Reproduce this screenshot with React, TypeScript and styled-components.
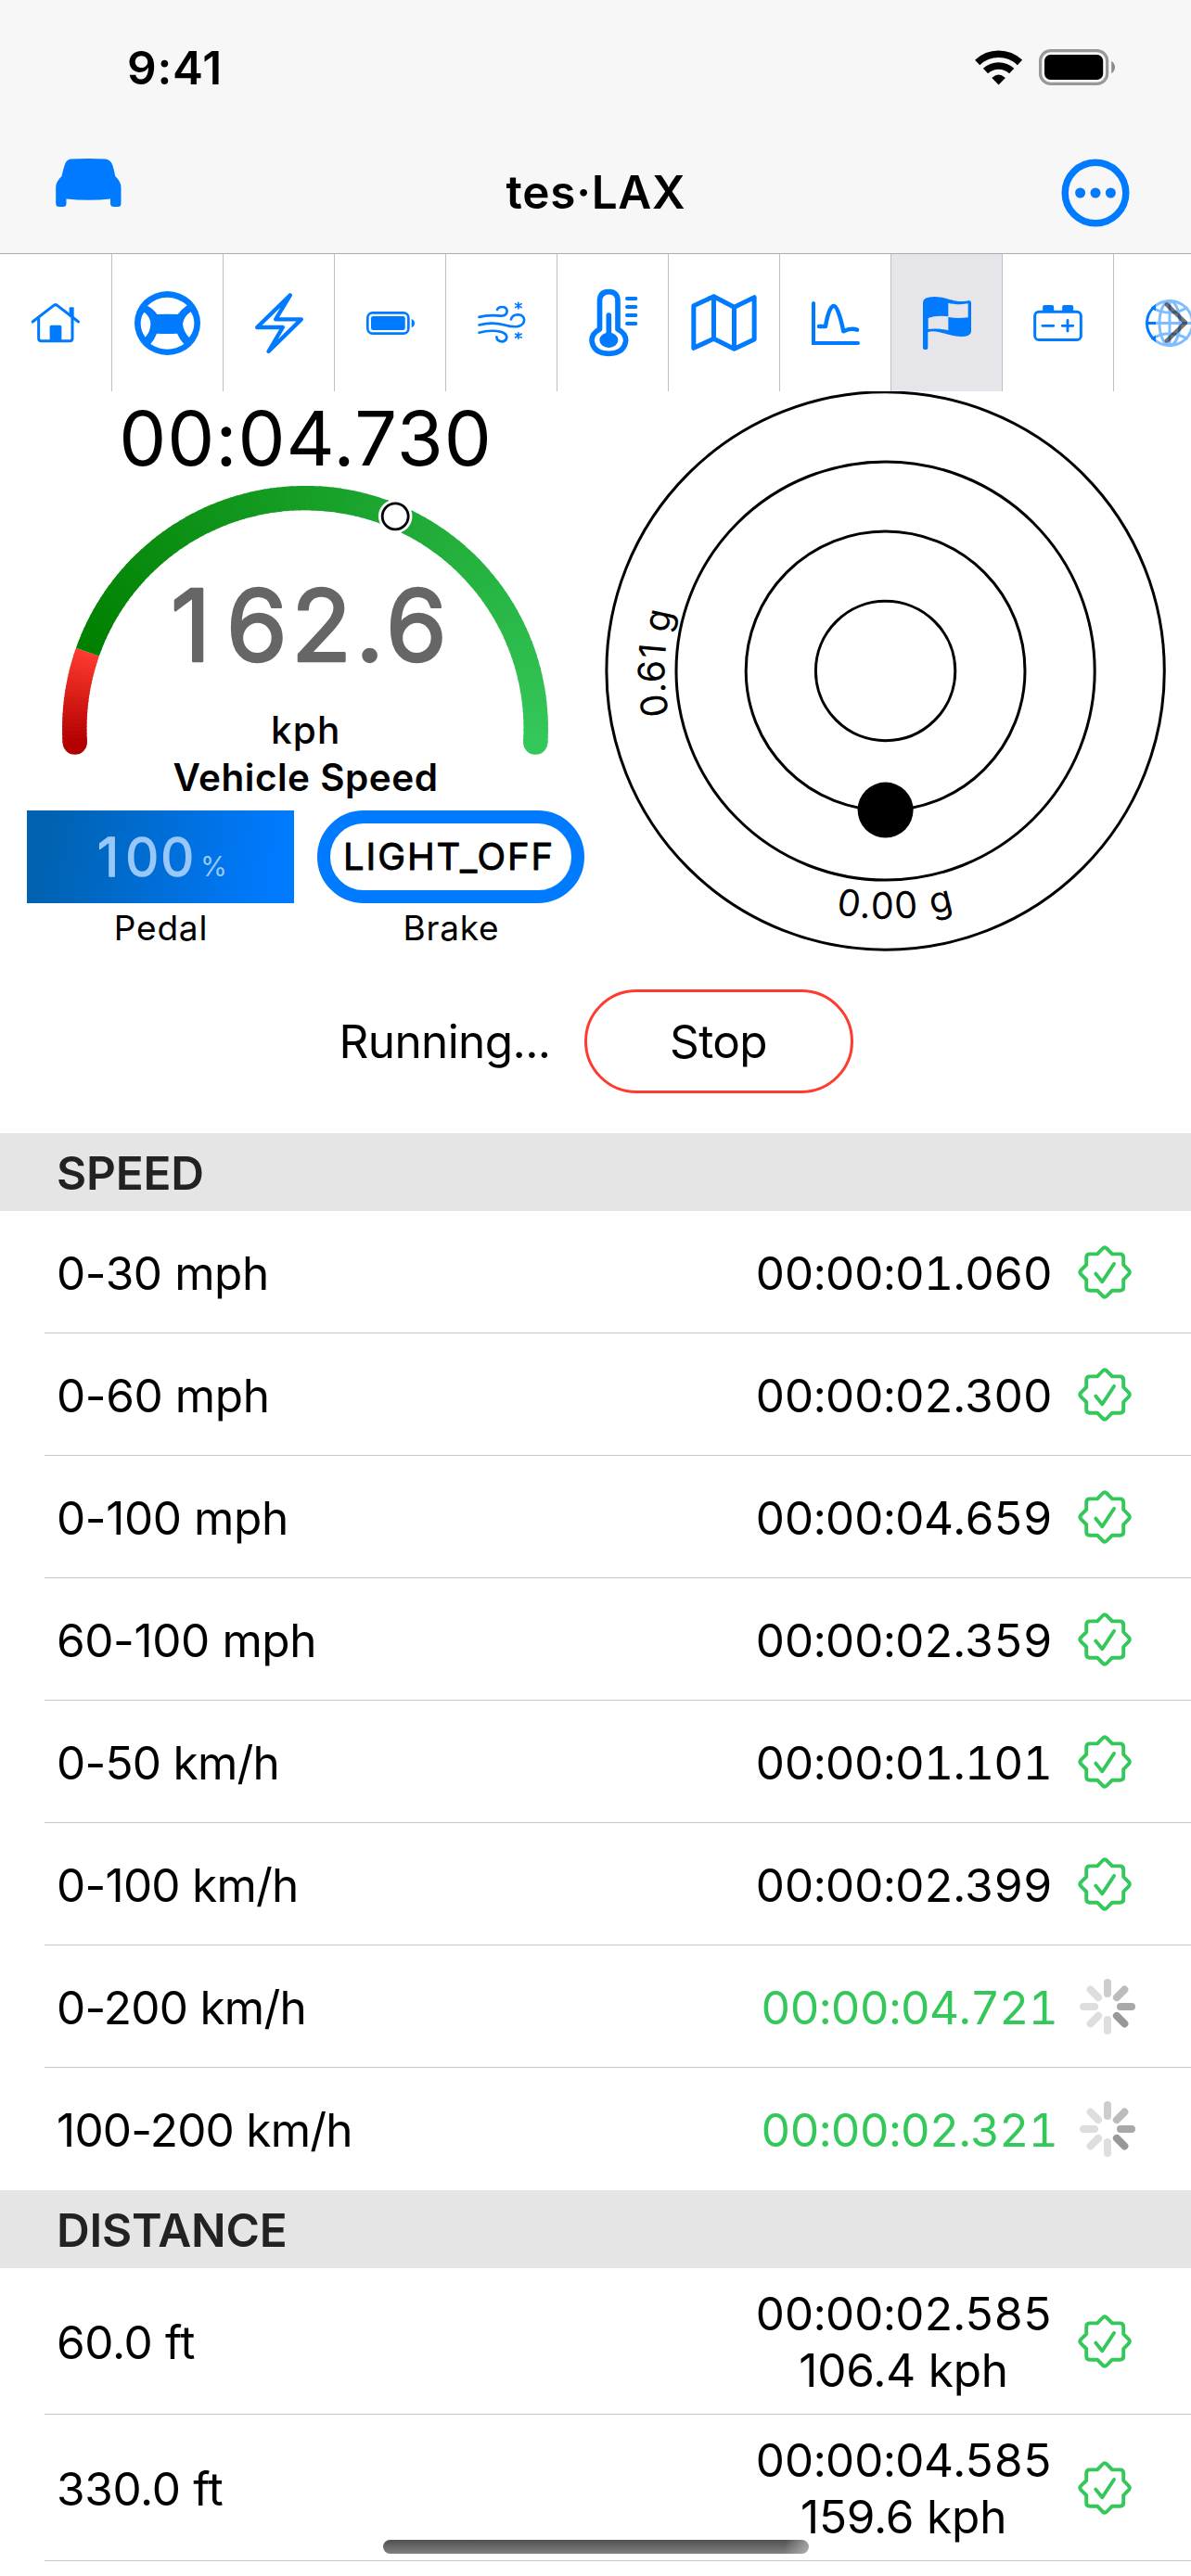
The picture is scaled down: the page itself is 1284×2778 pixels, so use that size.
import React from "react";
import styled, { createGlobalStyle } from "styled-components";

const BLUE = "#007aff";
const GREEN = "#34c759";
const FONT = `Inter, "Liberation Sans", sans-serif`;

const GlobalStyle = createGlobalStyle`
  body { margin: 0; background: #fff; }
  * { box-sizing: border-box; }
  svg { display: block; flex: none; }
`;

const Screen = styled.main`
  position: relative;
  width: 1284px;
  height: 2778px;
  overflow: hidden;
  background: #fff;
  color: #000;
  font-family: ${FONT};
  font-size: 49.5px;
`;

const Header = styled.header`
  height: 274px;
  background: #f7f7f7;
  border-bottom: 1px solid #ababab;
`;

const StatusBar = styled.div`
  display: flex;
  align-items: center;
  height: 145px;
  padding: 0 81px 0 137px;
`;

const Clock = styled.span`
  flex: 1;
  font-weight: 600;
  letter-spacing: 0.8px;
`;

const StatusIcons = styled.div`
  display: flex;
  align-items: center;
  gap: 18px;
`;

const NavBar = styled.nav`
  display: grid;
  grid-template-columns: 85px 1fr 85px;
  align-items: center;
  height: 125px;
  padding: 0 60px;
`;

const NavButton = styled.button<{ $end?: boolean }>`
  display: flex;
  justify-content: ${(p) => (p.$end ? "flex-end" : "flex-start")};
  padding: 0 ${(p) => (p.$end ? 6 : 0)}px ${(p) => (p.$end ? 0 : 21)}px 0;
  border: 0;
  background: none;
`;

const Title = styled.h1`
  margin: 0;
  padding: 0 0 2px 1px;
  text-align: center;
  font-size: 49.5px;
  font-weight: 600;
  letter-spacing: 0.7px;
`;

const TabStrip = styled.div`
  position: relative;
  display: flex;
  height: 148px;
  overflow: hidden;
`;

const Tab = styled.button<{ $active?: boolean }>`
  display: flex;
  flex: none;
  align-items: center;
  justify-content: center;
  width: 120px;
  padding: 0;
  border: 0;
  border-right: 1px solid #c0c0c2;
  background: ${(p) => (p.$active ? "#e5e5ea" : "#fff")};
  color: ${BLUE};

  &:first-child {
    width: 121px;
  }
`;

const ScrollHint = styled.div`
  position: absolute;
  top: 0;
  right: 0;
  display: flex;
  align-items: center;
  width: 38px;
  height: 100%;
  padding-left: 9px;
  background: rgba(255, 255, 255, 0.5);
`;

const Dashboard = styled.section`
  display: flex;
  gap: 22px;
  height: 604px;
  padding-left: 29px;
`;

const SpeedPanel = styled.div`
  display: flex;
  flex-direction: column;
  align-items: center;
  width: 601px;
  padding-top: 2px;
`;

const Timer = styled.div`
  height: 98px;
  font-size: 81px;
  line-height: 98px;
  letter-spacing: 0.95px;
`;

const GaugeSvg = styled.svg`
  overflow: visible;
`;

const GaugeTitle = styled.div`
  height: 50px;
  font-size: 40.5px;
  font-weight: 600;
  line-height: 50px;
  letter-spacing: 0.5px;
`;

const Tiles = styled.div`
  display: grid;
  grid-template-columns: 288px 288px;
  gap: 25px;
  margin-top: 10px;
`;

const Tile = styled.div`
  display: flex;
  flex-direction: column;
  align-items: center;
`;

const PedalBar = styled.div`
  width: 288px;
  height: 100px;
  background: linear-gradient(100deg, #0062b0 8%, #007aff 92%);
`;

const BrakePill = styled.div`
  width: 288px;
  height: 100px;
  border: 14.5px solid ${BLUE};
  border-radius: 50px;
`;

const TileLabel = styled.span`
  padding-left: 1px;
  font-size: 37px;
  line-height: 53px;
  letter-spacing: 0.8px;
`;

const RoundText = styled.text<{ $size: number; $spacing: number; $stroke: number }>`
  font-family: ${FONT};
  font-size: ${(p) => p.$size}px;
  font-weight: 400;
  letter-spacing: ${(p) => p.$spacing}px;
  stroke: currentColor;
  stroke-width: ${(p) => p.$stroke}px;
  stroke-linejoin: round;
  fill: currentColor;
`;

const PlainText = styled.text<{ $size: number; $weight?: number; $spacing?: number }>`
  font-family: ${FONT};
  font-size: ${(p) => p.$size}px;
  font-weight: ${(p) => p.$weight ?? 400};
  letter-spacing: ${(p) => p.$spacing ?? 0}px;
`;

const ForceSvg = styled.svg`
  margin-top: -2px;
  overflow: visible;
`;

const RunBar = styled.section`
  display: flex;
  align-items: center;
  justify-content: center;
  gap: 36px;
  height: 196px;
  padding: 0 0 3px 1px;
`;

const RunState = styled.span`
  letter-spacing: -0.6px;
`;

const StopButton = styled.button`
  width: 290px;
  height: 112px;
  padding: 0;
  border: 3px solid #ff3b30;
  border-radius: 56px;
  background: #fff;
  color: #000;
  font: inherit;
  letter-spacing: -0.6px;
`;

const SectionHeader = styled.h2`
  height: 84px;
  margin: 0;
  padding: 2px 0 0 61px;
  background: #e5e5e5;
  color: #222;
  font-size: 49.5px;
  font-weight: 600;
  line-height: 82px;
  letter-spacing: -0.2px;
`;

const Row = styled.div<{ $tall?: boolean }>`
  height: ${(p) => (p.$tall ? 158 : 132)}px;
  padding-left: 48px;
`;

const RowBody = styled.div<{ $line: boolean }>`
  display: flex;
  align-items: center;
  justify-content: space-between;
  height: 100%;
  padding: ${(p) => (p.$line ? 1 : 0)}px 60px 0 13px;
  border-bottom: ${(p) => (p.$line ? "1px solid #c6c6c8" : "0")};
`;

const labelSpacing = { mph: -0.4, kmh: -0.75, ft: -0.35 };

const RowLabel = styled.span<{ $unit: keyof typeof labelSpacing }>`
  padding-top: 2px;
  letter-spacing: ${(p) => labelSpacing[p.$unit]}px;
`;

const Result = styled.div`
  display: flex;
  align-items: center;
  gap: 24px;
`;

const Times = styled.div<{ $running?: boolean }>`
  display: flex;
  flex-direction: column;
  align-items: center;
  padding-top: 2px;
  color: ${(p) => (p.$running ? GREEN : "#000")};
  line-height: 61px;
`;

const Elapsed = styled.span`
  font-variant-numeric: tabular-nums;
  letter-spacing: -0.75px;
`;

const TrapSpeed = styled.span`
  letter-spacing: -0.2px;
`;

const HomeIndicator = styled.div`
  position: absolute;
  bottom: 24px;
  left: 413px;
  width: 459px;
  height: 15px;
  border-radius: 8px;
  background:
    linear-gradient(100deg, rgba(190, 190, 190, 0) 94%, rgba(190, 190, 190, 0.75) 100%),
    linear-gradient(#505050, #808080);
`;

const WifiIcon = () => (
  <svg width="51" height="38" viewBox="1051 53.5 51 38" fill="none" stroke="#000">
    <path d="M1053.7 66.9A33.2 33.2 0 0 1 1099.5 66.9" strokeWidth="7.6" />
    <path d="M1062.5 76.1A20.5 20.5 0 0 1 1090.7 76.1" strokeWidth="7.6" />
    <path d="M1070.6 83.6Q1076.6 78.5 1082.6 83.6L1076.6 89.7Z" fill="#000" strokeWidth="1.8" />
  </svg>
);

const StatusBattery = () => (
  <svg width="83" height="39" viewBox="0 0 83 39">
    <rect x="1.6" y="1.6" width="72" height="35.8" rx="11" fill="none" stroke="#989898" strokeWidth="3.2" />
    <rect x="6" y="6" width="63.2" height="27" rx="6.5" />
    <path d="M78.2 12.8Q82 15.5 82 19.5T78.2 26.2Z" fill="#8c8c8c" />
  </svg>
);

const CarIcon = () => (
  <svg width="71" height="52" viewBox="0 0 71 52" fill={BLUE}>
    <path d="M16 0.6Q35.5-.6 54 .6Q59 1.200 61.300 7Q63 12 64.200 19Q70.500 25 70.500 31V48.500Q70.500 52 67 52H63Q59 52 59 48.500V43.400Q35 46 11.500 43.400V48.500Q11.500 52 8 52H4Q0.200 52 0.200 48.500V31Q0.200 25 6.500 19Q8 12 9.700 7Q11.500 1.200 16 .6Z" />
  </svg>
);

const MoreIcon = () => (
  <svg width="74" height="74" viewBox="0 0 74 74" fill={BLUE}>
    <circle cx="37" cy="37" r="32.8" fill="none" stroke={BLUE} strokeWidth="7.4" />
    <circle cx="20.600" cy="37" r="5.500" />
    <circle cx="37" cy="37" r="5.500" />
    <circle cx="53.400" cy="37" r="5.500" />
  </svg>
);

type GlyphProps = { box: string; w: number; h: number; stroke?: number; children: React.ReactNode };

const Glyph = ({ box, w, h, stroke = 0, children }: GlyphProps) => (
  <svg
    width={w}
    height={h}
    viewBox={box}
    overflow="visible"
    fill="none"
    stroke="currentColor"
    strokeWidth={stroke}
    strokeLinecap="round"
    strokeLinejoin="round"
  >
    {children}
  </svg>
);

const HouseGlyph = () => (
  <Glyph box="103 185 156 126" w={52} h={42} stroke={9}>
    <path d="M106.500 245L173 193.500Q180.500 186.500 188 193.500L254.500 245" />
    <path d="M126 232V299Q126 307 134 307H227Q235 307 235 299V232" />
    <path d="M162 307V261Q162 256 167 256H195Q200 256 200 261V307Z" fill="currentColor" stroke="none" />
    <path d="M225 226V201Q225 198 228 198H237Q240 198 240 201V238Z" fill="currentColor" stroke="none" />
  </Glyph>
);

const WheelGlyph = () => (
  <Glyph box="435 144 213 207" w={71} h={69}>
    <path
      fill="currentColor"
      fillRule="evenodd"
      d="M435 247.500A106.500 103.500 0 1 1 648 247.500A106.500 103.500 0 1 1 435 247.500Z
        M477 191Q505 164 541 164T605 190Q587 203 575 219Q541 217 508 219Q498 203 477 191Z
        M487 315Q500 300 507 281Q541 283 573 281Q581 300 595 315Q570 332 541 332T487 315Z
        M466 212Q486 225 487 250Q487 275 470 293Q455 272 455 248Q455 228 466 212Z
        M617 211Q594 226 591 250Q593 275 612 294Q628 272 628 248Q628 227 617 211Z"
    />
  </Glyph>
);

const BoltGlyph = () => (
  <Glyph box="822 150 155 195" w={52} h={65} stroke={13}>
    <path d="M935 157L828 261H911L865 339L971 235H888Z" />
  </Glyph>
);

const BatteryGlyph = () => (
  <Glyph box="1182 210 157 75" w={52} h={25} stroke={8}>
    <rect x="1186" y="214" width="133" height="67" rx="16" />
    <rect x="1197" y="225" width="111" height="45" rx="7" fill="currentColor" stroke="none" />
    <path d="M1329 234Q1339 238 1339 248T1329 261Z" fill="currentColor" stroke="none" />
  </Glyph>
);

const Asterisk = ({ x, y }: { x: number; y: number }) => (
  <path strokeWidth="5" d={`M${x} ${y - 10}V${y + 10}M${x - 10} ${y - 6}L${x + 10} ${y + 6}M${x - 10} ${y + 6}L${x + 10} ${y - 6}`} />
);

const WindGlyph = () => (
  <Glyph box="163 183 156 133" w={52} h={44} stroke={8}>
    <path d="M167 231C200 222 222 227 243 227Q258 225 258 211Q256 198 242 198Q229 198 226 207" />
    <path d="M167 257C200 248 225 250 250 257Q275 264 292 262Q314 258 314 240Q312 224 294 223Q274 224 271 239" />
    <path d="M167 282Q205 271 240 280Q257 286 257 297Q255 311 240 311Q225 309 224 296" />
    <Asterisk x={295} y={194} />
    <Asterisk x={295} y={292} />
  </Glyph>
);

const ThermometerGlyph = () => (
  <Glyph box="521 141 156 216" w={52} h={72} stroke={17}>
    <path d="M555.500 180Q555.500 149 585 149T614 180V270Q640 284 640 306Q636 348 585 349Q534 348 530 306Q530 284 555.500 270Z" />
    <path d="M585 225V300" />
    <ellipse cx="585" cy="305.500" rx="30" ry="24.500" fill="currentColor" stroke="none" />
    <path strokeWidth="12" d="M644 171H672M644 198H672M644 225H672M644 252H672" />
  </Glyph>
);

const MapGlyph = () => (
  <Glyph box="855 156 212 186" w={71} h={62} stroke={15}>
    <path d="M863 194L928 164L994 199L1059 167V303L994 334L928 301L863 331ZM928 164V301M994 199V334" />
  </Glyph>
);

const ChartGlyph = () => (
  <Glyph box="42 177 156 141" w={52} h={47} stroke={12}>
    <path strokeLinejoin="miter" d="M48 183V312H192" />
    <path strokeWidth="13.500" d="M66 258H87Q98 192 114 192Q128 192 145 274Q168 262 189 269" />
  </Glyph>
);

const FlagGlyph = () => (
  <Glyph box="402 162 156 171" w={52} h={57}>
    <path
      fill="currentColor"
      fillRule="evenodd"
      d="M402 180Q402 162 440 162C475 163 500 177 522 177Q543 177 550 174Q558 174 558 182V275Q556 291 525 291C490 291 460 274 435 274Q425 274 418 277V326Q418 333 410 333T402 326Z
        M484 182C503 187 530 188 548 184V229Q515 234 484 228Z
        M419 231Q445 221 484 226V271Q448 262 419 267Z"
    />
  </Glyph>
);

const CarBatteryGlyph = () => (
  <Glyph box="762 189 158 117" w={53} h={39} stroke={9}>
    <rect x="766.500" y="210.500" width="149" height="91" rx="13" />
    <path d="M792 208V195Q792 189 798 189H822Q828 189 828 195V208ZM855 208V195Q855 189 861 189H885Q891 189 891 195V208Z" fill="currentColor" stroke="none" />
    <path strokeWidth="8.500" d="M791 256H827M855 256H890M872.500 238V273" />
  </Glyph>
);

const GlobeGlyph = () => (
  <Glyph box="1122 171 156 153" w={52} h={51} stroke={9}>
    <ellipse cx="1200" cy="247.500" rx="73.500" ry="72" />
    <ellipse cx="1200" cy="247.500" rx="33" ry="72" />
    <path d="M1200 175V320M1127 247.500H1273M1145 198Q1200 229 1255 198M1145 297Q1200 266 1255 297" />
  </Glyph>
);

const tabs = [
  HouseGlyph, WheelGlyph, BoltGlyph, BatteryGlyph, WindGlyph, ThermometerGlyph,
  MapGlyph, ChartGlyph, FlagGlyph, CarBatteryGlyph, GlobeGlyph,
];
const ACTIVE_TAB = 8;

const mix = (a: number[], b: number[], t: number) =>
  `rgb(${a.map((v, i) => Math.round(v + (b[i] - v) * t)).join(",")})`;

const CX = 329;
const CY = 785.8;
const R = 248.7;
const polar = (deg: number, r = R) => {
  const a = (deg * Math.PI) / 180;
  return [CX - r * Math.cos(a), CY - r * Math.sin(a)];
};

type ArcProps = { from: number; to: number; a: number[]; b: number[]; steps: number };

/* Angles run clockwise from the left-hand side of the dial. */
const GradientArc = ({ from, to, a, b, steps }: ArcProps) => (
  <g fill="none" strokeWidth="26.400">
    {Array.from({ length: steps }, (_, i) => {
      const s = from + ((to - from) * i) / steps;
      const e = Math.min(to, from + ((to - from) * (i + 1)) / steps + 0.4);
      const [x1, y1] = polar(s);
      const [x2, y2] = polar(e);
      return <path key={i} d={`M${x1} ${y1}A${R} ${R} 0 0 1 ${x2} ${y2}`} stroke={mix(a, b, (i + 0.5) / steps)} />;
    })}
  </g>
);

const Gauge = () => {
  const [lx, ly] = polar(-3.4);
  const [rx, ry] = polar(183.4);
  const [mx, my] = polar(113);
  return (
    <GaugeSvg width="601" height="292" viewBox="29 522 601 292">
      <circle cx={lx} cy={ly} r="13.200" fill="#b30000" />
      <circle cx={rx} cy={ry} r="13.200" fill={GREEN} />
      <GradientArc from={-3.4} to={19.4} a={[179, 0, 0]} b={[255, 59, 48]} steps={24} />
      <GradientArc from={19.4} to={183.4} a={[0, 128, 0]} b={[52, 199, 89]} steps={100} />
      <circle cx={mx} cy={my} r="18.300" fill="#fff" />
      <circle cx={mx} cy={my} r="14" fill="#fff" stroke="#000" strokeWidth="2.800" />
      <g color="#666">
        <RoundText x="184" y="712.500" dx="0 12" $size={106.6} $spacing={4.3} $stroke={2.5}>162.6</RoundText>
      </g>
      <PlainText x="292" y="802.400" $size={40.5} $weight={500} $spacing={1.2}>kph</PlainText>
    </GaugeSvg>
  );
};

const ForceMeter = () => (
  <ForceSvg width="606" height="606" viewBox="652 420 606 606">
    <defs>
      <path id="lateral" d="M954.6 962A238.500 238.500 0 1 1 955.6 962" />
      <path id="longitudinal" d="M687 723.500A267.600 267.600 0 0 0 1222.200 723.500" />
    </defs>
    <g fill="none" stroke="#000" strokeWidth="3">
      {[75.2, 150.4, 225.6, 300.7].map((r) => (
        <circle key={r} cx="954.600" cy="723.500" r={r} />
      ))}
    </g>
    <circle cx="954.600" cy="873.600" r="30" />
    <PlainText $size={39.5} $spacing={0.4}>
      <textPath href="#lateral" startOffset="326">0.61 g</textPath>
    </PlainText>
    <PlainText $size={39.5} $spacing={1.9}>
      <textPath href="#longitudinal" startOffset="366">0.00 g</textPath>
    </PlainText>
  </ForceSvg>
);

const SealIcon = () => (
  <svg width="66" height="58" viewBox="-4.300 -.300 66 58" fill="none" stroke={GREEN} strokeWidth="3.900" strokeLinecap="round" strokeLinejoin="round">
    <path d="M20.700 9.100L26.400 3.200Q28.700.900 31 3.200L36.700 9.100H45Q48.900 9.100 48.900 13V20.700L54.400 26.400Q56.600 28.700 54.400 31L48.900 36.700V45Q48.900 48.400 45 48.400H36.700L31 54.200Q28.700 56.500 26.400 54.200L20.700 48.400H12.500Q8.900 48.400 8.900 45V36.700L3.200 31Q.900 28.700 3.200 26.400L8.900 20.700V13Q8.900 9.100 12.500 9.100Z" />
    <path d="M19 30.300L26 39L38.700 19.700" />
  </svg>
);

const spokeColors = ["#cdcdd0", "#bcbcbf", "#a9a9ab", "#98989a", "#dedee0", "#dedee0", "#dedee0", "#dedee0"];

const Spinner = () => (
  <svg width="60" height="60" viewBox="-30 -30 60 60" strokeWidth="8" strokeLinecap="round">
    {spokeColors.map((c, i) => (
      <line key={i} x1="0" y1="-14" x2="0" y2="-26" stroke={c} transform={`rotate(${i * 45})`} />
    ))}
  </svg>
);

type Entry = {
  label: string;
  unit: keyof typeof labelSpacing;
  time: string;
  speed?: string;
  running?: boolean;
};

const speedRuns: Entry[] = [
  { label: "0-30 mph", unit: "mph", time: "00:00:01.060" },
  { label: "0-60 mph", unit: "mph", time: "00:00:02.300" },
  { label: "0-100 mph", unit: "mph", time: "00:00:04.659" },
  { label: "60-100 mph", unit: "mph", time: "00:00:02.359" },
  { label: "0-50 km/h", unit: "kmh", time: "00:00:01.101" },
  { label: "0-100 km/h", unit: "kmh", time: "00:00:02.399" },
  { label: "0-200 km/h", unit: "kmh", time: "00:00:04.721", running: true },
  { label: "100-200 km/h", unit: "kmh", time: "00:00:02.321", running: true },
];

const distanceRuns: Entry[] = [
  { label: "60.0 ft", unit: "ft", time: "00:00:02.585", speed: "106.4 kph" },
  { label: "330.0 ft", unit: "ft", time: "00:00:04.585", speed: "159.6 kph" },
];

const RunRow = ({ entry, line }: { entry: Entry; line: boolean }) => (
  <Row $tall={!!entry.speed}>
    <RowBody $line={line}>
      <RowLabel $unit={entry.unit}>{entry.label}</RowLabel>
      <Result>
        <Times $running={entry.running}>
          <Elapsed>{entry.time}</Elapsed>
          {entry.speed && <TrapSpeed>{entry.speed}</TrapSpeed>}
        </Times>
        {entry.running ? <Spinner /> : <SealIcon />}
      </Result>
    </RowBody>
  </Row>
);

export default function App() {
  return (
    <Screen>
      <GlobalStyle />
      <Header>
        <StatusBar>
          <Clock>9:41</Clock>
          <StatusIcons>
            <WifiIcon />
            <StatusBattery />
          </StatusIcons>
        </StatusBar>
        <NavBar>
          <NavButton><CarIcon /></NavButton>
          <Title>tes·LAX</Title>
          <NavButton $end><MoreIcon /></NavButton>
        </NavBar>
      </Header>
      <TabStrip>
        {tabs.map((Icon, i) => (
          <Tab key={i} $active={i === ACTIVE_TAB}><Icon /></Tab>
        ))}
        <ScrollHint>
          <svg width="25" height="44" viewBox="0 0 25 44" fill="none" stroke="#000" strokeOpacity="0.55" strokeWidth="4.600" strokeLinecap="round" strokeLinejoin="round">
            <path d="M3 2.500L23 22L3 41.500" />
          </svg>
        </ScrollHint>
      </TabStrip>
      <Dashboard>
        <SpeedPanel>
          <Timer>00:04.730</Timer>
          <Gauge />
          <GaugeTitle>Vehicle Speed</GaugeTitle>
          <Tiles>
            <Tile>
              <PedalBar>
                <svg width="288" height="100" color="#99c8f8">
                  <RoundText x="76" y="71" dx="0 5" $size={57} $spacing={2} $stroke={1.4}>100</RoundText>
                  <PlainText x="187" y="71" $size={29.5} fill="currentColor">%</PlainText>
                </svg>
              </PedalBar>
              <TileLabel>Pedal</TileLabel>
            </Tile>
            <Tile>
              <BrakePill>
                <svg width="259" height="71">
                  <RoundText x="14" y="49.500" $size={40} $spacing={1.9} $stroke={0.9}>LIGHT_OFF</RoundText>
                </svg>
              </BrakePill>
              <TileLabel>Brake</TileLabel>
            </Tile>
          </Tiles>
        </SpeedPanel>
        <ForceMeter />
      </Dashboard>
      <RunBar>
        <RunState>Running...</RunState>
        <StopButton>Stop</StopButton>
      </RunBar>
      <SectionHeader>SPEED</SectionHeader>
      {speedRuns.map((entry, i) => (
        <RunRow key={entry.label} entry={entry} line={i < speedRuns.length - 1} />
      ))}
      <SectionHeader>DISTANCE</SectionHeader>
      {distanceRuns.map((entry) => (
        <RunRow key={entry.label} entry={entry} line />
      ))}
      <HomeIndicator />
    </Screen>
  );
}
